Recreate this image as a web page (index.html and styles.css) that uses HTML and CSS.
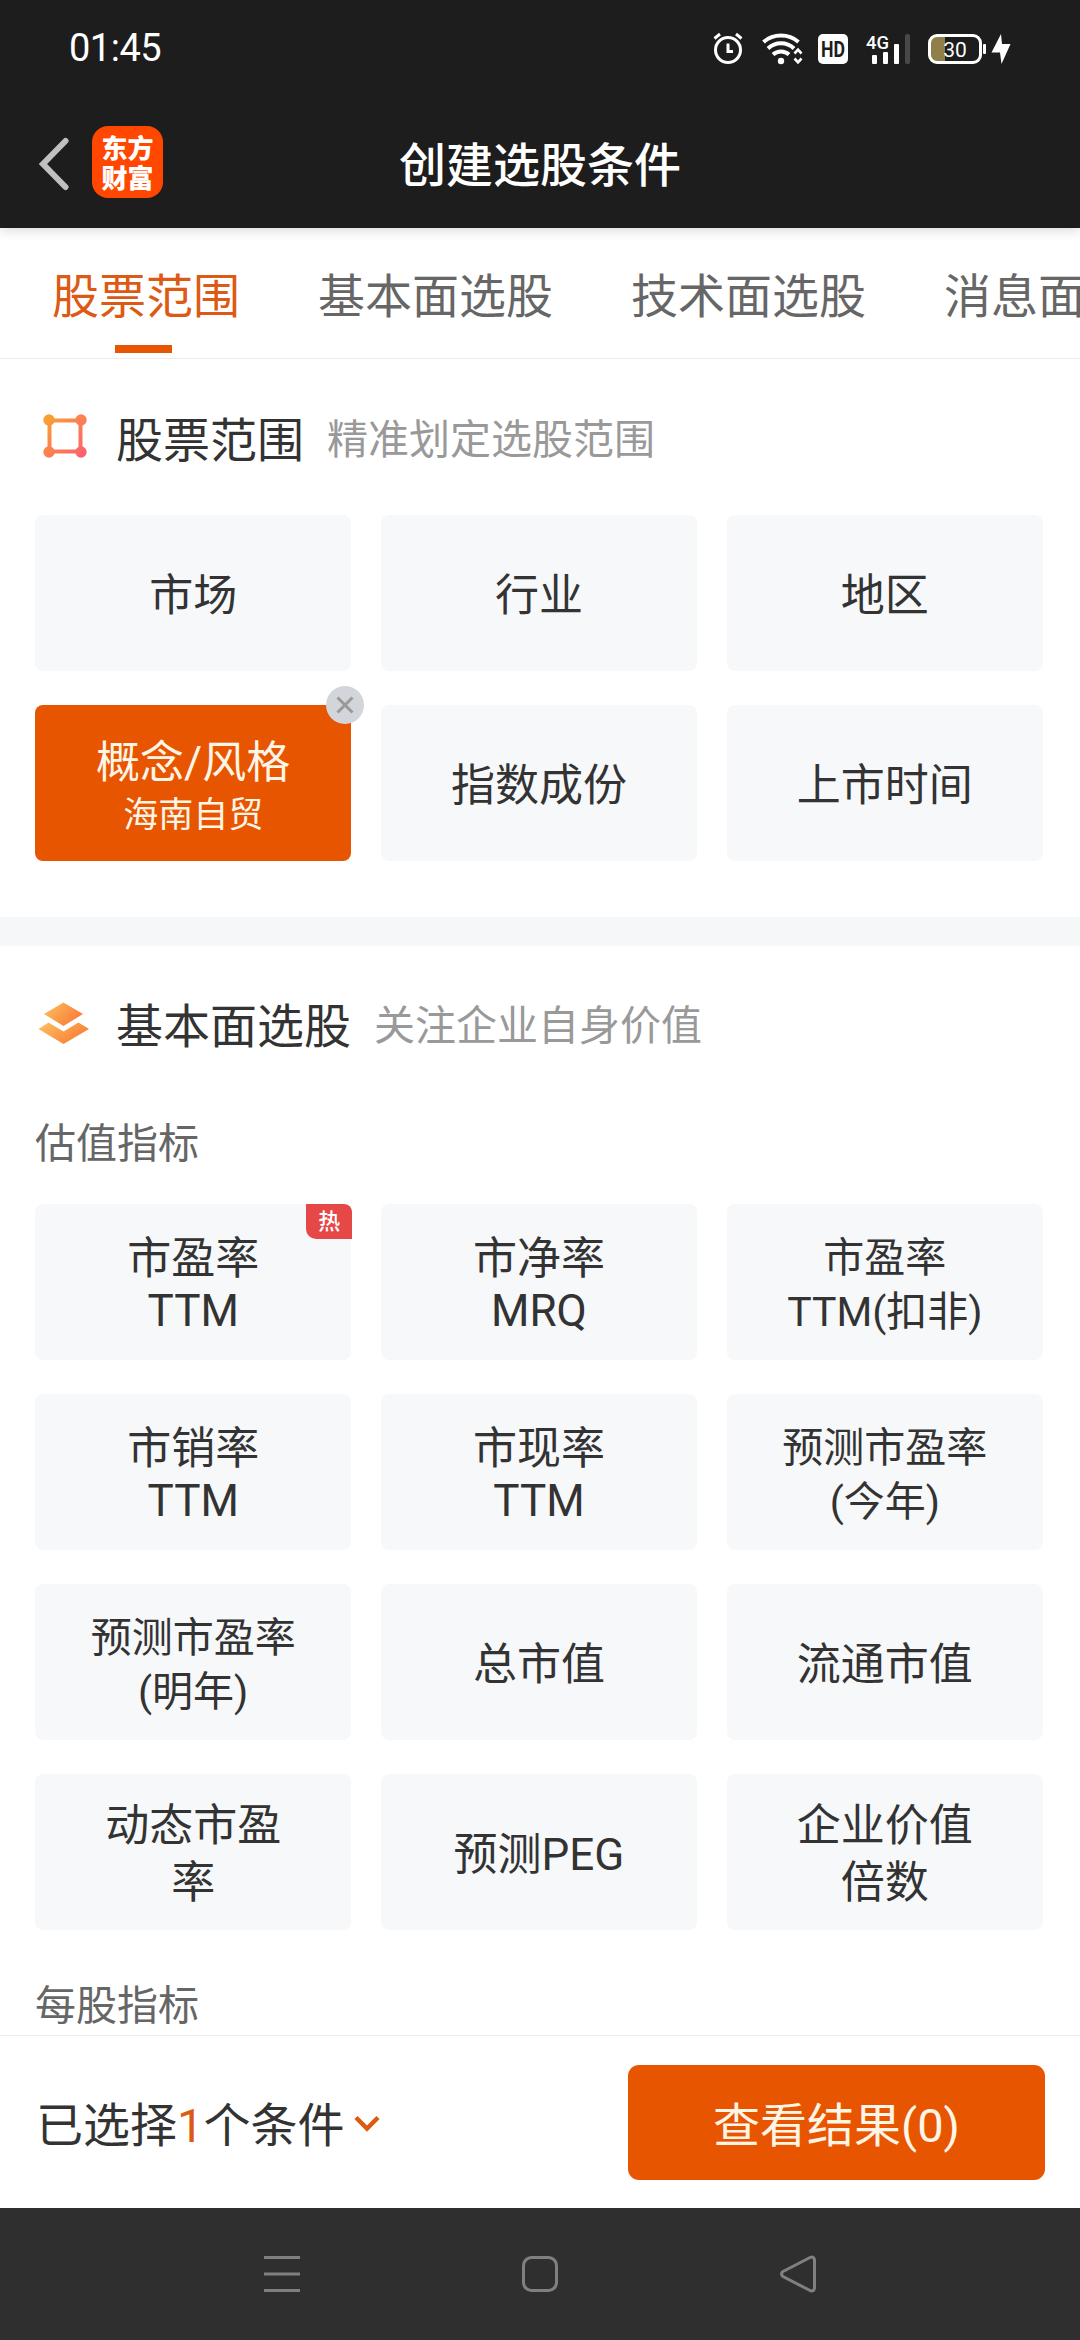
FILE: index.html
```html
<!DOCTYPE html>
<html lang="zh-CN">
<head>
    <meta charset="UTF-8">
    <meta name="viewport" content="width=device-width, initial-scale=1.0">
    <title>创建选股条件</title>
    <link rel="stylesheet" href="styles.css">
</head>
<body>

    <div class="status-bar">
        <span class="clock">01:45</span>
        <svg class="status-icons" width="306" height="40" viewBox="0 0 306 40">
            <!-- alarm -->
            <g fill="none" stroke="#fff" stroke-width="3">
                <circle cx="18" cy="22" r="12.5"/>
                <path d="M18 15.500v8h5M4.500 10.500l5.500-4.500M31.500 10.500L26 6"/>
            </g>
            <!-- wifi -->
            <g fill="none" stroke="#fff" stroke-width="4">
                <path d="M53.500 14a27 27 0 0 1 35 0"/>
                <path d="M58 20.500a19 19 0 0 1 26 0"/>
                <path d="M63 26.500a12 12 0 0 1 16 0"/>
                <path d="M84.500 25.500l3.500-3.800 3.500 3.800M84.500 30.500l3.500 3.800 3.500-3.800" stroke-width="2.600"/>
            </g>
            <circle cx="71" cy="33" r="3.200" fill="#fff"/>
            <!-- hd -->
            <rect x="108" y="6" width="30" height="30" rx="5" fill="#fff"/>
            <text x="123" y="29" class="hd-text" textLength="24" lengthAdjust="spacingAndGlyphs">HD</text>
            <!-- signal -->
            <text x="156" y="20.500" class="net-text" textLength="23" lengthAdjust="spacingAndGlyphs">4G</text>
            <g fill="#fff">
                <rect x="162" y="27" width="5" height="9" rx="1"/>
                <rect x="173" y="24" width="5" height="12" rx="1"/>
                <rect x="184" y="16" width="5" height="20" rx="1"/>
                <rect x="195" y="6" width="5" height="30" rx="2" fill="#484848"/>
            </g>
            <!-- battery -->
            <path d="M225 9h10v24h-10q-4 0-4-4V13q0-4 4-4z" fill="#907f48"/>
            <rect x="219.500" y="7.500" width="51" height="27" rx="7.500" fill="none" stroke="#fff" stroke-width="3"/>
            <rect x="273" y="16" width="3" height="10" rx="1" fill="#fff"/>
            <text x="245" y="28.500" class="battery-text">30</text>
            <path d="M291 6L281.500 24.500H290L291.500 36L300.500 16H292z" fill="#fff"/>
        </svg>
    </div>

    <div class="header">
        <svg class="back" width="32" height="54" viewBox="0 0 32 54">
            <path d="M27.500 4L5 27l22.500 23" fill="none" stroke="#c0c0c0" stroke-width="6" stroke-linecap="round"/>
        </svg>
        <div class="logo">东方<br>财富</div>
        <h1>创建选股条件</h1>
    </div>

    <div class="tabs">
        <div class="tab active">股票范围</div>
        <div class="tab">基本面选股</div>
        <div class="tab">技术面选股</div>
        <div class="tab">消息面选股</div>
    </div>

    <div class="content">
        <div class="section range">
            <div class="section-title">
                <svg class="section-icon" width="54" height="54" viewBox="0 0 54 54">
                    <defs>
                        <linearGradient id="rangeFill" x1="5" y1="5" x2="48" y2="49" gradientUnits="userSpaceOnUse">
                            <stop offset="0.100" stop-color="#f9a033"/>
                            <stop offset="0.500" stop-color="#fb8152"/>
                            <stop offset="0.950" stop-color="#fb6070"/>
                        </linearGradient>
                    </defs>
                    <rect x="11.500" y="11.500" width="31" height="31" fill="none" stroke="url(#rangeFill)" stroke-width="4"/>
                    <g fill="url(#rangeFill)">
                        <circle cx="11" cy="11" r="5.700"/>
                        <circle cx="43" cy="11" r="5.700"/>
                        <circle cx="11" cy="43" r="5.700"/>
                        <circle cx="43" cy="43" r="5.700"/>
                    </g>
                </svg>
                <h2>股票范围</h2>
                <span class="desc">精准划定选股范围</span>
            </div>
            <div class="grid">
                <div class="item">市场</div>
                <div class="item">行业</div>
                <div class="item">地区</div>
                <div class="item selected">
                    概念/风格
                    <span class="value">海南自贸</span>
                    <svg class="remove" width="38" height="38" viewBox="0 0 38 38">
                        <circle cx="19" cy="19" r="19" fill="#d2d6db"/>
                        <path d="M11.500 11.500l15 15M26.500 11.500l-15 15" stroke="#999" stroke-width="3"/>
                    </svg>
                </div>
                <div class="item">指数成份</div>
                <div class="item">上市时间</div>
            </div>
        </div>

        <div class="section basic">
            <div class="section-title">
                <svg class="section-icon" width="54" height="54" viewBox="0 0 54 54">
                    <defs>
                        <linearGradient id="layerFill" x1="0" y1="0" x2="1" y2="0.600">
                            <stop offset="0.100" stop-color="#fdbb60"/>
                            <stop offset="0.900" stop-color="#f9833a"/>
                        </linearGradient>
                    </defs>
                    <path d="M25.500 7.500L45 19 25.500 31 6 19z" fill="url(#layerFill)"/>
                    <path d="M10.500 27.500L25.500 36.500 40.500 27.500 51 34 25.500 49 .5 34z" fill="url(#layerFill)"/>
                    <path d="M6 22l19.500 12L45 22" fill="none" stroke="#fff" stroke-width="2.500"/>
                </svg>
                <h2>基本面选股</h2>
                <span class="desc">关注企业自身价值</span>
            </div>
            <h3>估值指标</h3>
            <div class="grid">
                <div class="item">市盈率<span class="latin">TTM</span><span class="hot">热</span></div>
                <div class="item">市净率<span class="latin">MRQ</span></div>
                <div class="item small">市盈率<br>TTM(扣非)</div>
                <div class="item">市销率<span class="latin">TTM</span></div>
                <div class="item">市现率<span class="latin">TTM</span></div>
                <div class="item small">预测市盈率<br>(今年)</div>
                <div class="item small">预测市盈率<br>(明年)</div>
                <div class="item">总市值</div>
                <div class="item">流通市值</div>
                <div class="item">动态市盈<br>率</div>
                <div class="item">预测PEG</div>
                <div class="item">企业价值<br>倍数</div>
            </div>
            <h3 class="next">每股指标</h3>
        </div>
    </div>

    <div class="footer">
        <div class="picked">
            <span>已选择<b>1</b>个条件</span>
            <svg width="28" height="20" viewBox="0 0 28 20">
                <path d="M3 3.500l11 11 11-11" fill="none" stroke="#dc5a14" stroke-width="4.500"/>
            </svg>
        </div>
        <button class="submit">查看结果(0)</button>
    </div>

    <div class="nav-bar">
        <svg width="40" height="40" viewBox="0 0 40 40">
            <path d="M2 3.500h36M2 20h36M2 36.500h36"/>
        </svg>
        <svg width="40" height="40" viewBox="0 0 40 40">
            <rect x="3.500" y="3.500" width="33" height="33" rx="8"/>
        </svg>
        <svg width="40" height="40" viewBox="0 0 40 40">
            <path d="M5 17.500L32 3.500q4-1.500 4.500 2.500v28q-.5 4-4.500 2.500L5 22.500q-3-2.500 0-5z"/>
        </svg>
    </div>

</body>
</html>
```
FILE: styles.css
```css
* {
    box-sizing: border-box;
}

body {
    font-family: Roboto, "Noto Sans CJK SC", sans-serif;
    background-color: #fff;
    color: #333;
    margin: 0;
    height: 2340px;
    display: flex;
    flex-direction: column;
    overflow: hidden;
}

h1, h2, h3 {
    margin: 0;
    font-weight: normal;
}

/* status bar */
.status-bar {
    flex: none;
    height: 96px;
    padding: 0 70px 0 69px;
    background-color: #1d1d1d;
    color: #fff;
    position: relative;
    display: flex;
    justify-content: space-between;
    align-items: center;
    z-index: 2;
}

.status-bar .status-icons {
    margin-right: -6px;
}

.clock {
    font-size: 38px;
    letter-spacing: -0.5px;
}

.status-icons text {
    font-family: Roboto, sans-serif;
    fill: #fff;
}

.status-icons .hd-text {
    font-size: 22px;
    font-weight: bold;
    text-anchor: middle;
    fill: #1d1d1d;
}

.status-icons .net-text {
    font-size: 19px;
    font-weight: 500;
}

.status-icons .battery-text {
    font-size: 21px;
    text-anchor: middle;
}

/* title bar */
.header {
    flex: none;
    height: 132px;
    padding: 0 0 0 38px;
    background-color: #1d1d1d;
    box-shadow: 0 2px 12px rgba(0, 0, 0, 0.16);
    color: #fff;
    position: relative;
    display: flex;
    align-items: center;
    z-index: 1;
}

.header .back {
    margin-top: 3px;
}

.header .logo {
    width: 71px;
    height: 72px;
    margin-left: 22px;
    padding-top: 6px;
    border-radius: 16px;
    background-color: #ff4700;
    font-family: "Noto Sans CJK SC", sans-serif;
    font-size: 26px;
    font-weight: 900;
    line-height: 30px;
    text-align: center;
}

.header h1 {
    flex: 1;
    padding: 0 163px 2px 0;
    font-size: 47px;
    font-weight: 500;
    text-align: center;
}

/* tabs */
.tabs {
    flex: none;
    height: 131px;
    padding-left: 52px;
    border-bottom: 1px solid #ebebeb;
    display: flex;
    gap: 78px;
    overflow: hidden;
}

.tab {
    flex: none;
    height: 125px;
    color: #666;
    font-size: 47px;
    line-height: 137px;
}

.tab.active {
    color: #dc5a14;
    display: flex;
    flex-direction: column;
}

.tab.active::after {
    content: "";
    flex: none;
    width: 57px;
    height: 8px;
    margin: -20px 0 0 63px;
    background-color: #e85500;
}

/* condition list */
.content {
    flex: 1;
    min-height: 0;
    overflow: hidden;
}

.section {
    padding: 0 37px 0 35px;
}

.section.range {
    padding-bottom: 56px;
    border-bottom: 29px solid #f6f7f9;
}

.section-title {
    display: flex;
    align-items: center;
    height: 156px;
    padding-bottom: 2px;
}

.section.basic .section-title {
    height: 154px;
}

.section-icon {
    flex: none;
    margin: 0 0 0 3px;
}

.section-title h2 {
    margin-left: 24px;
    font-size: 47px;
}

.section-title .desc {
    margin-left: 23px;
    color: #999;
    font-size: 41px;
}

.section h3 {
    height: 104px;
    padding-top: 14px;
    color: #666;
    font-size: 41px;
    line-height: 60px;
}

.section h3.next {
    padding-top: 46px;
}

.grid {
    display: grid;
    grid-template-columns: repeat(3, 1fr);
    grid-auto-rows: 156px;
    gap: 34px 29.5px;
}

.item {
    position: relative;
    padding-top: 6px;
    border-radius: 8px;
    background-color: #f7f8fa;
    font-size: 44px;
    line-height: 57px;
    text-align: center;
    align-content: center;
}

.item.small {
    padding-top: 5px;
    font-size: 41px;
    line-height: 54px;
}

.item .latin {
    display: block;
    margin-bottom: 5px;
    line-height: 47px;
}

.item.selected {
    padding-top: 8px;
    background-color: #e85500;
    color: #fff5e6;
}

.item .value {
    display: block;
    font-size: 35px;
    line-height: 48px;
}

.item .remove {
    position: absolute;
    top: -19px;
    right: -13px;
}

.item .hot {
    position: absolute;
    top: 0;
    right: -1px;
    width: 46px;
    height: 35px;
    border-radius: 0 8px 0 10px;
    background-color: #e64848;
    color: #fff;
    font-size: 22px;
    font-weight: 500;
    line-height: 36px;
}

/* bottom bar */
.footer {
    flex: none;
    height: 173px;
    padding: 0 35px 0 36px;
    border-top: 1px solid #ebebeb;
    display: flex;
    justify-content: space-between;
    align-items: center;
}

.picked {
    padding-bottom: 1px;
    font-size: 47px;
    display: flex;
    align-items: center;
}

.picked svg {
    margin: 4px 0 0 9px;
}

.picked b {
    color: #dc5a14;
    font-weight: normal;
}

.submit {
    width: 417px;
    height: 115px;
    padding: 0 0 1px;
    border: none;
    border-radius: 11px;
    background-color: #e85500;
    color: #fff5e6;
    font-family: inherit;
    font-size: 47px;
}

/* system navigation */
.nav-bar {
    flex: none;
    height: 132px;
    padding: 0 262px;
    background-color: #2f2f2f;
    display: flex;
    justify-content: space-between;
    align-items: center;
}

.nav-bar svg {
    fill: none;
    stroke: #808080;
    stroke-width: 3;
}
```
